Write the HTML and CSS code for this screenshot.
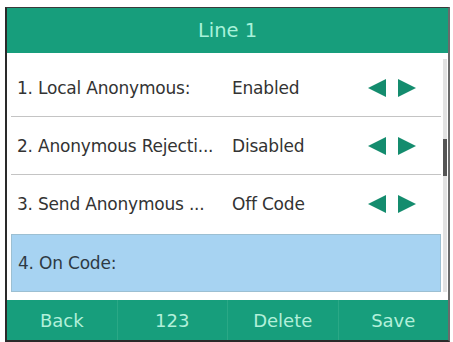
FILE: index.html
```html
<!DOCTYPE html>
<html>
<head>
<meta charset="utf-8">
<link rel="stylesheet" href="styles.css">
</head>
<body>
<div class="frame">
  <div class="header">Line 1</div>
  <div class="content">
    <div class="list">
      <div class="row sep">
        <span class="label">1. Local Anonymous:</span>
        <span class="value">Enabled</span>
        <span class="arrows">
          <svg width="50" height="20" viewBox="0 0 50 20"><polygon points="0,10 18,1 18,19" /><polygon points="30,1 48,10 30,19" /></svg>
        </span>
      </div>
      <div class="row sep">
        <span class="label">2. Anonymous Rejecti...</span>
        <span class="value">Disabled</span>
        <span class="arrows">
          <svg width="50" height="20" viewBox="0 0 50 20"><polygon points="0,10 18,1 18,19" /><polygon points="30,1 48,10 30,19" /></svg>
        </span>
      </div>
      <div class="row">
        <span class="label">3. Send Anonymous ...</span>
        <span class="value">Off Code</span>
        <span class="arrows">
          <svg width="50" height="20" viewBox="0 0 50 20"><polygon points="0,10 18,1 18,19" /><polygon points="30,1 48,10 30,19" /></svg>
        </span>
      </div>
      <div class="row selected">
        <span class="label">4. On Code:</span>
      </div>
    </div>
    <div class="scrollbar"><div class="thumb"></div></div>
  </div>
  <div class="footer">
    <div class="key">Back</div>
    <div class="key">123</div>
    <div class="key">Delete</div>
    <div class="key">Save</div>
  </div>
</div>
</body>
</html>
```
FILE: styles.css
```css
html, body {
  margin: 0;
  padding: 0;
  background: #ffffff;
}
body {
  font-family: "DejaVu Sans", "Noto Sans", sans-serif;
  width: 453px;
  height: 342px;
  overflow: hidden;
}
.frame {
  margin: 7px 0 0 5px;
  width: 441px;
  height: 332px;
  border-left: 2px solid #2a2a2a;
  border-top: 1px solid #3a3a3a;
  border-right: 2px solid #6a6a6a;
  border-bottom: 2px solid #2a2a2a;
  display: flex;
  flex-direction: column;
}
.header {
  height: 45px;
  background: #179e7c;
  color: #a8f2da;
  font-size: 19.5px;
  display: flex;
  align-items: center;
  justify-content: center;
  flex: none;
}
.content {
  flex: 1;
  display: flex;
  background: #ffffff;
  padding-top: 6px;
}
.list {
  flex: 1;
  margin-left: 4px;
  display: flex;
  flex-direction: column;
}
.row {
  height: 58px;
  display: flex;
  align-items: center;
  color: #333333;
  font-size: 17px;
  box-sizing: border-box;
}
.row.sep {
  border-bottom: 1px solid #c4c4c4;
}
.label {
  width: 215px;
  padding-left: 6px;
  flex: none;
  white-space: nowrap;
  letter-spacing: -0.2px;
}
.value {
  width: 136px;
  flex: none;
  letter-spacing: -0.2px;
}
.arrows {
  display: flex;
  align-items: center;
}
.arrows svg {
  fill: #148c6e;
}
.row.selected {
  margin-top: 1px;
  background: #a7d3f2;
  border: 1px solid #9cbfd2;
  color: #2e3a44;
}
.scrollbar {
  width: 4px;
  margin: 0 1px 8px 2px;
  background: #e2e2e2;
  position: relative;
}
.thumb {
  position: absolute;
  left: 0;
  right: 0;
  top: 80px;
  height: 37px;
  background: #555555;
}
.footer {
  height: 40px;
  background: #179e7c;
  display: flex;
  flex: none;
}
.key {
  flex: 1;
  display: flex;
  align-items: center;
  justify-content: center;
  color: #b2f0da;
  font-size: 18px;
  border-left: 1px solid #2aa886;
}
.key:first-child {
  border-left: none;
}
```
